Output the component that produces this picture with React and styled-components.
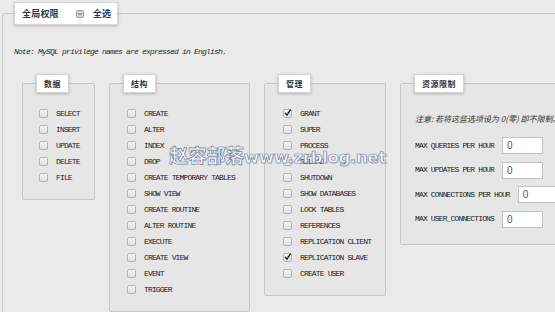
import React from "react";
import styled, { createGlobalStyle } from "styled-components";

const Global = createGlobalStyle`
  html, body { margin: 0; padding: 0; background: #ececec; }
  body { overflow: hidden; font-family: "Liberation Mono", monospace; }
`;

const Page = styled.div`
  position: relative;
  width: 555px;
  height: 312px;
  overflow: hidden;
  background: #ececec;
`;

const Outer = styled.div`
  margin: 13px 0 0 2px;
  width: 640px;
  min-height: 330px;
  border: 1px solid #c9c9c9;
  border-right: none;
  border-radius: 3px 0 0 0;
  background: #eaeaea;
  box-sizing: border-box;
`;

const TopLegend = styled.div`
  display: flex;
  align-items: center;
  box-sizing: border-box;
  width: 104px;
  height: 23px;
  margin: -12px 0 0 11px;
  padding: 0 7px;
  background: #fff;
  border: 1px solid #d6d6d6;
  box-shadow: 0 1px 3px rgba(0, 0, 0, 0.22);
  font-family: "Noto Sans CJK SC", sans-serif;
  font-weight: 700;
  font-size: 9px;
  line-height: 12px;
  white-space: nowrap;
  color: #2b3a4a;
`;

const Title = styled.span`
  flex: none;
  letter-spacing: 0.2px;
`;

const Minus = styled.span`
  display: inline-flex;
  flex: none;
  margin: 0 9px 0 17px;
  width: 8px;
  height: 8px;
`;

const SelectAll = styled.span`
  flex: none;
  color: #1f3d5c;
  letter-spacing: 0.2px;
`;

const Note = styled.div`
  margin: 22px 0 0 11px;
  height: 10px;
  line-height: 10px;
  font-family: "Liberation Mono", monospace;
  font-style: italic;
  font-size: 8px;
  letter-spacing: -0.8px;
  color: #2a2a2a;
  white-space: nowrap;
`;

const Groups = styled.div`
  display: flex;
  align-items: flex-start;
  gap: 14px;
  margin: 26px 0 0 19px;
`;

const Fieldset = styled.div`
  width: ${(p) => p.$w}px;
  box-sizing: border-box;
  border: 1px solid #c6c6c6;
  border-radius: 2px;
  background: #e6e6e6;
  padding-bottom: ${(p) => p.$pb}px;
`;

const Legend = styled.div`
  display: flex;
  align-items: center;
  width: max-content;
  box-sizing: border-box;
  height: 19px;
  margin: -10px 0 0 13px;
  padding: 0 7px;
  background: #fff;
  border: 1px solid #d4d4d4;
  box-shadow: 0 1px 3px rgba(0, 0, 0, 0.22);
  font-family: "Noto Sans CJK SC", sans-serif;
  font-weight: 700;
  font-size: 8px;
  line-height: 10px;
  letter-spacing: 0.5px;
  white-space: nowrap;
  color: #333;
`;

const List = styled.div`
  display: flex;
  flex-direction: column;
  margin-top: 13px;
  padding-left: ${(p) => p.$pl}px;
`;

const Row = styled.label`
  display: flex;
  align-items: center;
  gap: 8px;
  height: 16px;
`;

const Box = styled.span`
  position: relative;
  box-sizing: border-box;
  width: 9px;
  height: 9px;
  margin-top: -1px;
  border: 1px solid #b3b3b3;
  border-radius: 2px;
  background: linear-gradient(#f4f4f4, #e2e2e2);
  flex: none;
`;

const Check = styled.svg`
  position: absolute;
  left: -1px;
  top: -2px;
  overflow: visible;
`;

const Text = styled.span`
  font-family: "Liberation Mono", monospace;
  font-size: 8px;
  line-height: 10px;
  letter-spacing: -0.85px;
  color: #222;
  white-space: nowrap;
`;

const ResNote = styled.div`
  margin: 21px 0 0 14px;
  height: 10px;
  line-height: 10px;
  font-family: "Noto Sans CJK SC", sans-serif;
  font-style: italic;
  font-size: 8px;
  color: #333;
  white-space: nowrap;
`;

const ResList = styled.div`
  display: flex;
  flex-direction: column;
  gap: 7.5px;
  margin: 13px 0 0 14px;
`;

const ResRow = styled.div`
  display: flex;
  align-items: center;
  gap: 8px;
  height: 17px;
`;

const Input = styled.div`
  box-sizing: border-box;
  width: 41px;
  height: 17px;
  padding-left: 4px;
  border: 1px solid #c3c3c3;
  background: #fff;
  font-family: "Liberation Sans", sans-serif;
  font-size: 10px;
  line-height: 15px;
  color: #555;
`;

const Watermark = styled.div`
  position: absolute;
  left: 169px;
  top: 141px;
  display: flex;
  align-items: baseline;
  white-space: nowrap;
  color: #f3f7ff;
  -webkit-text-stroke: 0.7px #7b8394;
  text-shadow: 1px 1px 0 rgba(120, 140, 200, 0.25);
  pointer-events: none;
`;

const WmCn = styled.span`
  font-family: "Noto Sans CJK SC", sans-serif;
  font-weight: 700;
  font-size: 19px;
  letter-spacing: -0.3px;
`;

const WmEn = styled.span`
  font-family: "DejaVu Sans", sans-serif;
  font-weight: 700;
  font-size: 16.5px;
  letter-spacing: -0.3px;
`;

const data = ["SELECT", "INSERT", "UPDATE", "DELETE", "FILE"];
const structure = [
  "CREATE",
  "ALTER",
  "INDEX",
  "DROP",
  "CREATE TEMPORARY TABLES",
  "SHOW VIEW",
  "CREATE ROUTINE",
  "ALTER ROUTINE",
  "EXECUTE",
  "CREATE VIEW",
  "EVENT",
  "TRIGGER",
];
const admin = [
  ["GRANT", true],
  ["SUPER", false],
  ["PROCESS", false],
  ["RELOAD", false],
  ["SHUTDOWN", false],
  ["SHOW DATABASES", false],
  ["LOCK TABLES", false],
  ["REFERENCES", false],
  ["REPLICATION CLIENT", false],
  ["REPLICATION SLAVE", true],
  ["CREATE USER", false],
];
const limits = [
  "MAX QUERIES PER HOUR",
  "MAX UPDATES PER HOUR",
  "MAX CONNECTIONS PER HOUR",
  "MAX USER_CONNECTIONS",
];

function Checkbox({ checked }) {
  return (
    <Box>
      {checked && (
        <Check width="9" height="9" viewBox="0 0 9 9">
          <path d="M2 5 L4 7.2 L7.6 1.6" fill="none" stroke="#222" strokeWidth="1.4" />
        </Check>
      )}
    </Box>
  );
}

function Item({ label, checked }) {
  return (
    <Row>
      <Checkbox checked={checked} />
      <Text>{label}</Text>
    </Row>
  );
}

export default function App() {
  return (
    <Page>
      <Global />
      <Outer>
        <TopLegend>
          <Title>全局权限</Title>
          <Minus>
            <svg width="8" height="8" viewBox="0 0 8 8">
              <rect x="0.5" y="0.5" width="7" height="7" rx="1" fill="#d8d8d8" stroke="#9b9b9b" />
              <rect x="2" y="3.5" width="4" height="1" fill="#555" />
            </svg>
          </Minus>
          <SelectAll>全选</SelectAll>
        </TopLegend>
        <Note>Note: MySQL privilege names are expressed in English.</Note>
        <Groups>
          <Fieldset $w={73} $pb={13}>
            <Legend>数据</Legend>
            <List $pl={16}>
              {data.map((d) => (
                <Item key={d} label={d} />
              ))}
            </List>
          </Fieldset>
          <Fieldset $w={141} $pb={13}>
            <Legend>结构</Legend>
            <List $pl={17}>
              {structure.map((d) => (
                <Item key={d} label={d} />
              ))}
            </List>
          </Fieldset>
          <Fieldset $w={122} $pb={13}>
            <Legend>管理</Legend>
            <List $pl={18}>
              {admin.map(([d, c]) => (
                <Item key={d} label={d} checked={c} />
              ))}
            </List>
          </Fieldset>
          <Fieldset $w={220} $pb={16}>
            <Legend>资源限制</Legend>
            <ResNote>注意: 若将这些选项设为 0(零) 即不限制。</ResNote>
            <ResList>
              {limits.map((l) => (
                <ResRow key={l}>
                  <Text>{l}</Text>
                  <Input>0</Input>
                </ResRow>
              ))}
            </ResList>
          </Fieldset>
        </Groups>
      </Outer>
      <Watermark>
        <WmCn>赵容部落</WmCn>
        <WmEn>www.zrblog.net</WmEn>
      </Watermark>
    </Page>
  );
}
